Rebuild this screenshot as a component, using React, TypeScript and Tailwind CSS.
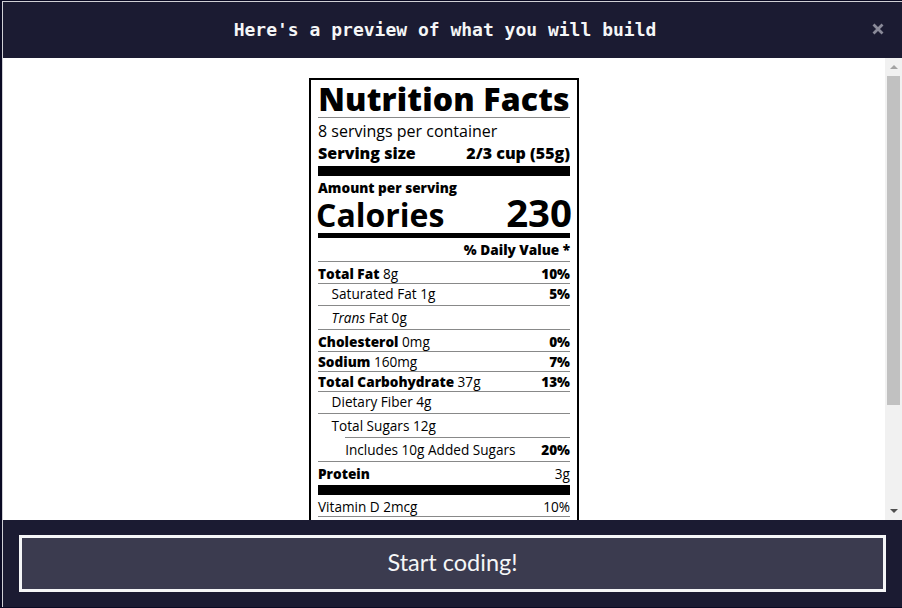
import React from 'react';

const rowLine = 'border-b border-[#888989]';

const Divider = ({ className = '' }: { className?: string }) => (
  <div className={`border-b border-[#888989] my-[2px] ${className}`} />
);

const Row = ({
  label,
  amount,
  pct,
  divider = true,
  indent = '',
}: {
  label?: string;
  amount: string;
  pct?: string;
  divider?: boolean;
  indent?: string;
}) => (
  <p className={`flex justify-between ${divider ? rowLine : ''} ${indent}`}>
    <span>
      {label && <span className="font-extrabold">{label}</span>} {amount}
    </span>
    {pct && <span className="font-extrabold">{pct}</span>}
  </p>
);

const NutritionLabel = () => (
  <div className="w-[270px] mx-auto mt-[20px] border-2 border-black px-[7px] font-['Open_Sans',sans-serif] text-black text-[16px] leading-[normal]">
    <header>
      <h1 className="text-[32px] font-extrabold text-center mt-[-3px] mb-[-5px] tracking-[0.15px]">Nutrition Facts</h1>
      <Divider />
      <p>8 servings per container</p>
      <p className="flex justify-between font-extrabold">
        Serving size <span>2/3 cup (55g)</span>
      </p>
    </header>
    <div className="h-[10px] bg-black my-[2px]" />
    <div>
      <p className="text-[13.6px] font-extrabold">Amount per serving</p>
      <h1 className="flex justify-between text-[32px] font-bold mx-[-2px] mt-[-4px] mb-[-7px] overflow-hidden">
        Calories <span className="text-[38.4px] mt-[-7px]">230</span>
      </h1>
    </div>
    <div className="h-[5px] bg-black my-[2px]" />
    <div className="text-[13.6px]">
      <p className="text-right font-extrabold">% Daily Value *</p>
      <Divider />
      <Row label="Total Fat" amount="8g" pct="10%" />
      <p className="flex justify-between ml-[1em]">
        Saturated Fat 1g <span className="font-extrabold">5%</span>
      </p>
      <Divider />
      <p className="ml-[1em]">
        <i>Trans</i> Fat 0g
      </p>
      <Divider />
      <Row label="Cholesterol" amount="0mg" pct="0%" />
      <Row label="Sodium" amount="160mg" pct="7%" />
      <Row label="Total Carbohydrate" amount="37g" pct="13%" />
      <p className="ml-[1em]">Dietary Fiber 4g</p>
      <Divider />
      <p className="ml-[1em]">Total Sugars 12g</p>
      <Divider className="ml-[2em]" />
      <p className="flex justify-between ml-[2em]">
        Includes 10g Added Sugars <span className="font-extrabold">20%</span>
      </p>
      <Divider />
      <p className="flex justify-between">
        <span className="font-extrabold">Protein</span> <span>3g</span>
      </p>
      <div className="h-[10px] bg-black my-[2px]" />
      <p className={`flex justify-between ${rowLine}`}>
        Vitamin D 2mcg <span>10%</span>
      </p>
      <p className={`flex justify-between ${rowLine}`}>
        Calcium 260mg <span>20%</span>
      </p>
      <p className={`flex justify-between ${rowLine}`}>
        Iron 8mg <span>45%</span>
      </p>
      <p className="flex justify-between">
        Potassium 235mg <span>6%</span>
      </p>
    </div>
  </div>
);

const FakeScrollbar = () => (
  <div className="w-[17px] shrink-0 bg-[#f1f1f1] flex flex-col items-center">
    <div className="h-[17px] flex items-center justify-center">
      <svg width="8" height="5" viewBox="0 0 8 5">
        <path d="M0 5 L4 1 L8 5 Z" fill="#a3a3a3" />
      </svg>
    </div>
    <div className="w-[13px] h-[329px] bg-[#c1c1c1] mt-[1px]" />
    <div className="flex-1" />
    <div className="h-[17px] flex items-center justify-center">
      <svg width="8" height="5" viewBox="0 0 8 5">
        <path d="M0 0 L8 0 L4 4 Z" fill="#505050" />
      </svg>
    </div>
  </div>
);

export default function App() {
  return (
    <div className="w-[902px] h-[608px] bg-[#0a0a23] pl-[2px] pt-[1px] pb-[1px] overflow-hidden">
      <div className="h-full flex flex-col border-t border-l border-[#d0d0d5] bg-[#1b1b32]">
        <div className="h-[56px] shrink-0 flex items-center pl-[20px] pr-[13px] pb-[2px]">
          <h2 className="flex-1 text-center font-['DejaVu_Sans_Mono',monospace] text-[18px] font-bold text-[#f5f6f7]">
            Here's a preview of what you will build
          </h2>
          <button className="w-[22px] h-[22px] flex items-center justify-center">
            <svg width="12" height="12" viewBox="0 0 12 12">
              <path d="M1.5 1.5 L10.5 10.5 M10.5 1.5 L1.5 10.5" stroke="#8a8a99" strokeWidth="2.8" />
            </svg>
          </button>
        </div>
        <div className="h-[462px] shrink-0 flex bg-white">
          <div className="flex-1 overflow-hidden">
            <NutritionLabel />
          </div>
          <FakeScrollbar />
        </div>
        <div className="flex-1 px-[16px] pt-[15px] pb-[14px]">
          <button className="w-full h-[57px] pb-[2px] bg-[#3b3b4f] border-[3px] border-[#f5f6f7] text-[#f5f6f7] font-['Lato',sans-serif] text-[23.5px]">
            Start coding!
          </button>
        </div>
      </div>
    </div>
  );
}
